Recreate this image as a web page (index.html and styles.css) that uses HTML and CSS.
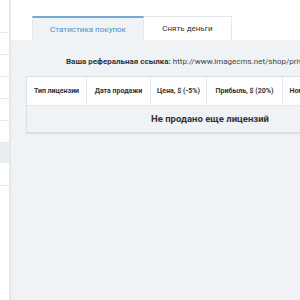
FILE: index.html
```html
<!DOCTYPE html>
<html lang="ru">
<head>
<meta charset="utf-8">
<link rel="stylesheet" href="styles.css">
</head>
<body>
<div class="layout">
  <aside class="sidebar">
    <div class="side-item first"></div>
    <div class="side-item"></div>
    <div class="side-item"></div>
    <div class="side-item"></div>
    <div class="side-item"></div>
    <div class="side-item"></div>
    <div class="side-item active"></div>
    <div class="side-item"></div>
  </aside>
  <main class="main">
    <div class="tabs">
      <div class="tab active">Статистика покупок</div>
      <div class="tab">Снять деньги</div>
    </div>
    <div class="panel">
      <p class="ref"><b>Ваша реферальная ссылка:</b> http://www.imagecms.net/shop/privileges</p>
      <div class="table">
        <div class="thead">
          <div class="th c1">Тип лицензии</div>
          <div class="th c2">Дата продажи</div>
          <div class="th c3">Цена, $ (-5%)</div>
          <div class="th c4">Прибыль, $ (20%)</div>
          <div class="th c5">Номер заказа</div>
        </div>
        <div class="empty">Не продано еще лицензий</div>
      </div>
    </div>
  </main>
</div>
</body>
</html>
```
FILE: styles.css
```css
html, body {
  margin: 0;
  padding: 0;
  height: 100%;
  overflow: hidden;
}
body {
  font-family: Roboto, "Liberation Sans", sans-serif;
  color: #333;
  background: #eff3f5;
}
.layout {
  display: flex;
  height: 300px;
}
.sidebar {
  width: 9px;
  flex: none;
  background: #fff;
  border-right: 2px solid #e3e8eb;
}
.side-item {
  height: 21px;
  border-bottom: 1px solid #e6eaed;
}
.side-item.first {
  height: 32px;
}
.side-item.active {
  background: #e9eef1;
  border-bottom-color: #fff;
  height: 20px;
}
.main {
  flex: 1;
  display: flex;
  flex-direction: column;
  min-width: 0;
  overflow: hidden;
}
.tabs {
  display: flex;
  background: #fff;
  padding: 16px 0 0 21px;
  height: 24px;
}
.tab {
  font-size: 8px;
  line-height: 22px;
  text-align: center;
  box-sizing: border-box;
  height: 24px;
  border: 1px solid #e3e8eb;
  border-bottom: none;
  color: #333;
}
.tab.active {
  width: 112px;
  background: #eff3f5;
  color: #4a8fcb;
  border-top: 2px solid #74a9d6;
  padding-top: 1px;
}
.tab:not(.active) {
  width: 88px;
  border-left: none;
  line-height: 24px;
}
.panel {
  flex: 1;
  padding: 16px 0 0 15px;
  overflow: hidden;
}
.ref {
  margin: 0 0 8px 40px;
  font-size: 8px;
  line-height: 12px;
  white-space: nowrap;
  color: #444;
}
.ref b {
  color: #333;
}
.table {
  border: 1px solid #d9dfe3;
  border-bottom-width: 2px;
  width: 366px;
  background: #eff3f5;
}
.thead {
  display: flex;
  background: #fff;
  height: 28px;
  border-bottom: 1px solid #e3e8eb;
}
.th {
  flex: none;
  font-size: 7px;
  font-weight: 700;
  line-height: 28px;
  text-align: center;
  color: #333;
  border-right: 1px solid #e6eaed;
  box-sizing: border-box;
  white-space: nowrap;
}
.c1 { width: 60px; }
.c2 { width: 64px; }
.c3 { width: 56px; }
.c4 { width: 76px; }
.c5 { width: 60px; }
.empty {
  font-size: 9.5px;
  font-weight: 700;
  line-height: 26px;
  text-align: center;
  color: #333;
}
```
